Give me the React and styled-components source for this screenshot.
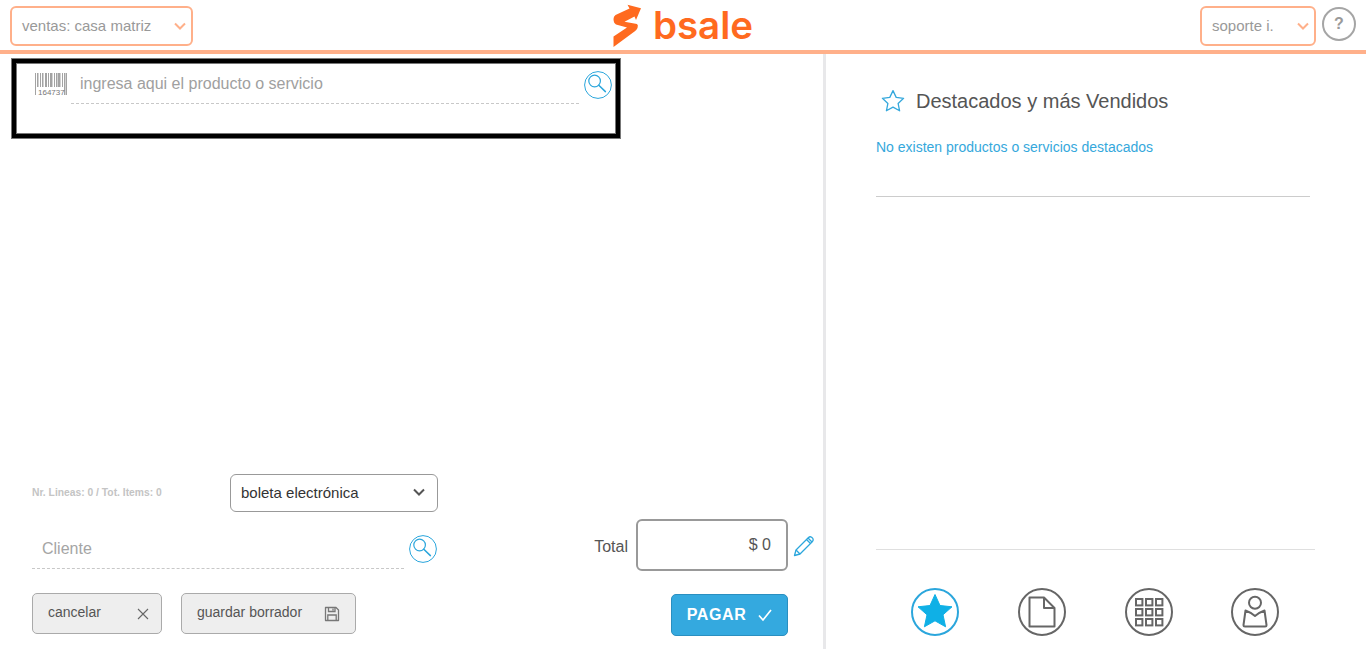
import React from 'react';
import styled, { createGlobalStyle } from 'styled-components';

const Global = createGlobalStyle`
  html, body { margin: 0; padding: 0; height: 100%; background: #fff; overflow: hidden; }
  body { font-family: "Liberation Sans", Arial, sans-serif; }
  * { box-sizing: border-box; }
`;

const Page = styled.div`
  width: 1366px;
  height: 649px;
  display: flex;
  flex-direction: column;
`;

const Header = styled.header`
  height: 54px;
  flex: none;
  border-bottom: 4px solid #ffb08a;
  display: grid;
  grid-template-columns: 1fr auto 1fr;
  align-items: start;
  padding: 6px 10px 0 10px;
`;

const HeaderRight = styled.div`
  display: flex;
  justify-content: flex-end;
  gap: 6px;
`;

const OrangeSelect = styled.div`
  width: ${p => p.$w}px;
  height: 40px;
  border: 2px solid #ffb08a;
  border-radius: 6px;
  padding: 0 4px 1px 10px;
  display: flex;
  align-items: center;
  justify-content: space-between;
  font-size: 15px;
  color: #999;
`;

const HelpButton = styled.div`
  width: 34px;
  height: 34px;
  border: 2px solid #a5a5a5;
  border-radius: 50%;
  color: #9a9a9a;
  font-size: 16px;
  font-weight: 700;
  display: flex;
  align-items: center;
  justify-content: center;
  margin-top: 1px;
`;

const Logo = styled.div`
  display: flex;
  align-items: center;
  gap: 11px;
  height: 44px;
  margin-top: -3px;
`;

const LogoWord = styled.span`
  font-family: "Inter", "Noto Sans", sans-serif;
  font-size: 38.5px;
  font-weight: 600;
  line-height: 44px;
  color: #ff6a1f;
`;

const Body = styled.main`
  flex: 1;
  min-height: 0;
  display: flex;
`;

const LeftPane = styled.section`
  width: 823px;
  flex: none;
  display: flex;
  flex-direction: column;
  justify-content: space-between;
  padding: 4px 8px 13px 11px;
`;

const SearchBox = styled.div`
  width: 610px;
  height: 81px;
  border: 1px solid #777;
  outline: 1px solid #777;
  outline-offset: -6px;
  box-shadow: inset 0 0 0 4px #000;
  padding: 11px 8px 0 23px;
  display: flex;
  align-items: flex-start;
`;

const Barcode = styled.div`
  width: 32px;
  flex: none;
  margin-top: 3px;
`;

const SearchField = styled.div`
  width: 509px;
  height: 34px;
  margin-left: 4px;
  border-bottom: 1px dashed #c8c8c8;
  padding: 5px 0 0 9px;
  font-size: 16px;
  color: #a0a0a0;
`;

const SearchIconSlot = styled.div`
  margin-left: 5px;
  margin-top: 1px;
  display: flex;
`;

const Footer = styled.div`
  display: flex;
  padding-left: 21px;
`;

const FormCol = styled.div`
  width: 406px;
  flex: none;
  display: flex;
  flex-direction: column;
`;

const MetaRow = styled.div`
  display: flex;
  align-items: center;
  justify-content: space-between;
`;

const Meta = styled.div`
  font-size: 10.3px;
  font-weight: 700;
  color: #c4c4c4;
  margin-top: -2px;
`;

const DocSelect = styled.div`
  width: 208px;
  height: 38px;
  border: 1px solid #999;
  border-radius: 6px;
  display: flex;
  align-items: center;
  justify-content: space-between;
  padding: 0 11px 2px 10px;
  font-size: 15px;
  color: #333;
`;

const ClientRow = styled.div`
  display: flex;
  align-items: flex-start;
  margin-top: 18px;
`;

const ClientField = styled.div`
  width: 372px;
  height: 39px;
  border-bottom: 1px dashed #c8c8c8;
  padding: 10px 0 0 10px;
  font-size: 16px;
  color: #a5a5a5;
`;

const ClientSearch = styled(SearchIconSlot)`
  margin-top: 5px;
`;

const ButtonRow = styled.div`
  display: flex;
  gap: 19px;
  margin-top: 24px;
`;

const GrayButton = styled.div`
  width: ${p => p.$w}px;
  height: 41px;
  background: #eeeeee;
  border: 1px solid #aaa;
  border-radius: 5px;
  display: flex;
  align-items: center;
  justify-content: space-between;
  padding: 0 ${p => p.$pr}px 4px 15px;
  font-size: 14px;
  color: #555;
`;

const ButtonIcon = styled.span`
  display: flex;
  margin-top: 4px;
`;

const TotalCol = styled.div`
  flex: 1;
  display: flex;
  flex-direction: column;
  align-items: flex-end;
  padding-top: 45px;
`;

const TotalRow = styled.div`
  display: flex;
  align-items: center;
  justify-content: flex-end;
`;

const TotalLabel = styled.div`
  font-size: 16px;
  color: #555;
  margin-right: 8px;
  margin-top: 3px;
`;

const TotalBox = styled.div`
  width: 152px;
  height: 52px;
  border: 2px solid #999;
  border-radius: 6px;
  display: flex;
  align-items: flex-start;
  justify-content: flex-end;
  padding: 15px 15px 0 0;
  font-size: 16px;
  color: #555;
`;

const Pencil = styled.div`
  width: 22px;
  margin-left: 5px;
  display: flex;
  margin-top: 2px;
`;

const PayRow = styled.div`
  padding-right: 27px;
  margin-top: 23px;
`;

const PayButton = styled.div`
  width: 117px;
  height: 42px;
  background: #34a9df;
  border: 1px solid #2a8fc0;
  border-radius: 5px;
  display: flex;
  align-items: center;
  justify-content: center;
  gap: 12px;
  font-size: 16px;
  font-weight: 700;
  letter-spacing: 0.6px;
  color: #fff;
`;

const RightPane = styled.aside`
  flex: 1;
  border-left: 3px solid #e8e8ea;
  display: flex;
  flex-direction: column;
  padding: 0 51px 0 50px;
`;

const PanelTitle = styled.div`
  display: flex;
  align-items: center;
  gap: 11px;
  margin-top: 33px;
  padding-left: 5px;
  font-size: 20px;
  color: #555;
  height: 28px;
`;

const EmptyNote = styled.div`
  margin-top: 23px;
  height: 59px;
  width: 434px;
  border-bottom: 1px solid #ccc;
  font-size: 14px;
  line-height: 18px;
  color: #35a8dc;
`;

const Spacer = styled.div`
  flex: 1;
`;

const Tabs = styled.nav`
  border-top: 1px solid #dfdfdf;
  height: 100px;
  display: flex;
  align-items: flex-start;
  padding: 38px 0 0 35px;
  gap: 58.8px;
`;

const TabSlot = styled.div`
  width: 48px;
  height: 48px;
  display: flex;
`;

const Chevron = ({ color, size = 14 }) => (
  <svg width={size} height={size} viewBox="0 0 14 14" fill="none" stroke={color} strokeWidth="2">
    <path d="M2 4.5 L7 9.5 L12 4.5" />
  </svg>
);

const SearchIcon = () => (
  <svg width="28" height="28" viewBox="0 0 28 28" fill="none" stroke="#2ba6dc">
    <circle cx="14" cy="14" r="13.4" strokeWidth="1" />
    <circle cx="10.6" cy="10" r="5.8" strokeWidth="1.2" />
    <path d="M14.8 14.2 L21.4 20.6" strokeWidth="1.5" strokeLinecap="round" />
  </svg>
);

const BarcodeIcon = () => {
  const bars = [[0,1],[2,1.5],[5,1],[7,1.5],[10,2],[13,1],[15,2.5],[19,1],[21,1.5],[23,2.5],[27,1],[29,1.5],[31,1]];
  return (
    <svg width="32" height="23" viewBox="0 0 32 23" fill="#a3a3a3">
      {bars.map(([x, w]) => <rect key={x} x={x} y="0" width={w} height={x < 2 || x > 28 ? 22 : 14} />)}
      <text x="3" y="21.5" fontSize="8" fontFamily="Liberation Sans" fill="#777">164737</text>
    </svg>
  );
};

const CloseIcon = () => (
  <svg width="12" height="12" viewBox="0 0 12 12" stroke="#666" strokeWidth="1.1" fill="none">
    <path d="M1 1 L11 11 M11 1 L1 11" />
  </svg>
);

const SaveIcon = () => (
  <svg width="16" height="16" viewBox="0 0 16 16" fill="none" stroke="#777" strokeWidth="1.3">
    <path d="M1.5 1.5 H12 L14.5 4 V14.5 H1.5 Z" strokeLinejoin="round" />
    <path d="M4.5 1.5 V5.5 H11 V1.5 M9 2.5 V4.5" />
    <path d="M3.8 14.5 V9 H12.2 V14.5" />
  </svg>
);

const PencilIcon = () => (
  <svg width="22" height="22" viewBox="0 0 22 22" fill="none" stroke="#2ba6dc" strokeWidth="1.3" strokeLinejoin="round">
    <path d="M1.5 20.5 L3 15 L15.5 2.5 Q17 1.2 18.6 2.2 L19.8 3.4 Q20.8 5 19.5 6.5 L7 19 Z" />
    <path d="M3 15 L7 19 M13.5 4.5 L17.5 8.5 M15 3 L19 7" />
  </svg>
);

const CheckIcon = () => (
  <svg width="14" height="14" viewBox="0 0 14 14" fill="none" stroke="#fff" strokeWidth="1.7">
    <path d="M1 7.5 L5 12 L13 2" />
  </svg>
);

const STAR = "M12 1.6 L15.2 8.4 L22.6 9.3 L17.1 14.4 L18.6 21.8 L12 18.1 L5.4 21.8 L6.9 14.4 L1.4 9.3 L8.8 8.4 Z";

const OutlineStar = () => (
  <svg width="24" height="24" viewBox="0 0 24 24" fill="none" stroke="#35a8dc" strokeWidth="1.3" strokeLinejoin="round">
    <path d={STAR} />
  </svg>
);

const Ring = ({ color = '#666', children }) => (
  <svg width="48" height="48" viewBox="0 0 48 48" fill="none">
    <circle cx="24" cy="24" r="23" stroke={color} strokeWidth="2" />
    {children}
  </svg>
);

const LogoMark = () => (
  <svg width="29" height="43" viewBox="0 0 29 43" fill="#ff6a1f">
    <path d="M0.5 15 Q0.5 12.5 2.5 11 L16.5 4.5 L14.5 0.8 L28 4.2 L23 16 L21.5 12.5 L11.5 17.8 L24 20 Q25.5 21 24.5 24 Q23.5 26 21.5 27.5 L0.5 43 L0.5 32.5 L14 23.5 L3 20.5 Q0.5 19 0.5 15 Z" />
  </svg>
);

export default function App() {
  return (
    <Page>
      <Global />
      <Header>
        <OrangeSelect $w={183}>
          ventas: casa matriz
          <Chevron color="#ffb08a" />
        </OrangeSelect>
        <Logo>
          <LogoMark />
          <LogoWord>bsale</LogoWord>
        </Logo>
        <HeaderRight>
          <OrangeSelect $w={116}>
            soporte i.
            <Chevron color="#ffb08a" />
          </OrangeSelect>
          <HelpButton>?</HelpButton>
        </HeaderRight>
      </Header>
      <Body>
        <LeftPane>
          <SearchBox>
            <Barcode><BarcodeIcon /></Barcode>
            <SearchField>ingresa aqui el producto o servicio</SearchField>
            <SearchIconSlot><SearchIcon /></SearchIconSlot>
          </SearchBox>
          <Footer>
            <FormCol>
              <MetaRow>
                <Meta>Nr. Lineas: 0 / Tot. Items: 0</Meta>
                <DocSelect>
                  boleta electrónica
                  <Chevron color="#555" />
                </DocSelect>
              </MetaRow>
              <ClientRow>
                <ClientField>Cliente</ClientField>
                <ClientSearch><SearchIcon /></ClientSearch>
              </ClientRow>
              <ButtonRow>
                <GrayButton $w={130} $pr={12}>
                  cancelar
                  <ButtonIcon><CloseIcon /></ButtonIcon>
                </GrayButton>
                <GrayButton $w={175} $pr={15}>
                  guardar borrador
                  <ButtonIcon><SaveIcon /></ButtonIcon>
                </GrayButton>
              </ButtonRow>
            </FormCol>
            <TotalCol>
              <TotalRow>
                <TotalLabel>Total</TotalLabel>
                <TotalBox>$ 0</TotalBox>
                <Pencil><PencilIcon /></Pencil>
              </TotalRow>
              <PayRow>
                <PayButton>PAGAR <CheckIcon /></PayButton>
              </PayRow>
            </TotalCol>
          </Footer>
        </LeftPane>
        <RightPane>
          <PanelTitle><OutlineStar />Destacados y más Vendidos</PanelTitle>
          <EmptyNote>No existen productos o servicios destacados</EmptyNote>
          <Spacer />
          <Tabs>
            <TabSlot>
              <Ring color="#2ba6dc">
                <path d="M24 6.5 L29 17.5 L41 18.8 L32 26.8 L34.6 38.8 L24 32.8 L13.4 38.8 L16 26.8 L7 18.8 L19 17.5 Z" fill="#0fb0e6" stroke="#0fb0e6" strokeLinejoin="round" />
              </Ring>
            </TabSlot>
            <TabSlot>
              <Ring>
                <path d="M11.5 9.5 H26 L36.5 20 V38.5 H11.5 Z M26 9.5 V20 H36.5" stroke="#666" strokeWidth="2" strokeLinejoin="round" />
              </Ring>
            </TabSlot>
            <TabSlot>
              <Ring>
                {[0, 1, 2].flatMap(r => [0, 1, 2].map(c => (
                  <rect key={`${r}-${c}`} x={11 + c * 10} y={11 + r * 10} width="6.4" height="6.4" stroke="#666" strokeWidth="2" />
                )))}
              </Ring>
            </TabSlot>
            <TabSlot>
              <Ring>
                <circle cx="24" cy="14.7" r="6" stroke="#666" strokeWidth="2" />
                <path d="M14.5 22.5 Q20 24.5 24 28 Q28 24.5 33.5 22.5 L35.5 37 Q35.5 38.5 34 38.5 H14 Q12.5 38.5 12.5 37 Z" stroke="#666" strokeWidth="2" strokeLinejoin="round" />
              </Ring>
            </TabSlot>
          </Tabs>
        </RightPane>
      </Body>
    </Page>
  );
}
